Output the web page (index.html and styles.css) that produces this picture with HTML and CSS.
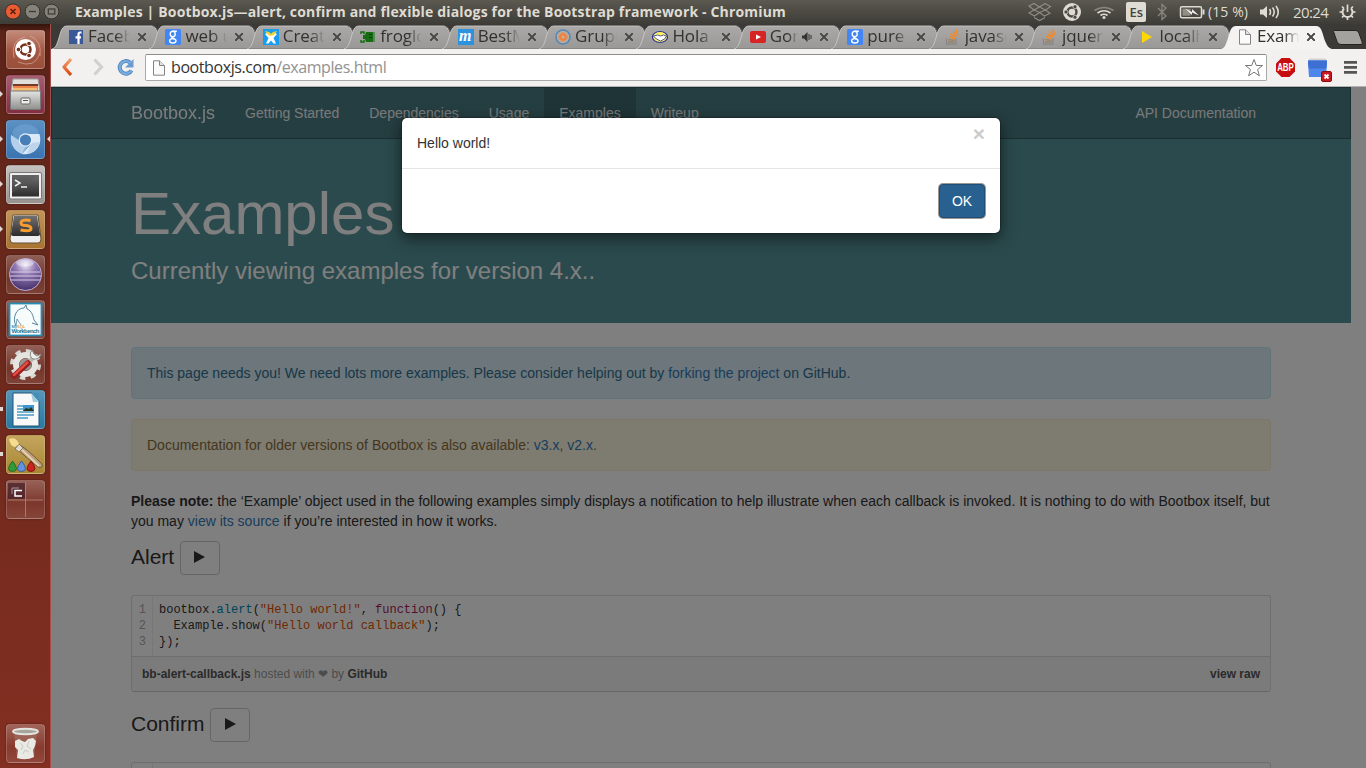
FILE: index.html
```html
<!DOCTYPE html>
<html lang="en">
<head>
<meta charset="utf-8">
<title>Examples | Bootbox.js</title>
<link rel="stylesheet" href="styles.css">
</head>
<body>
<svg class="defs" width="0" height="0">
  <defs>
    <linearGradient id="tabg" x1="0" y1="0" x2="0" y2="1"><stop offset="0" stop-color="#aaa9a7"/><stop offset="1" stop-color="#999896"/></linearGradient>
    <linearGradient id="shine" x1="0" y1="0" x2="0" y2="1"><stop offset="0" stop-color="#fff" stop-opacity=".25"/><stop offset=".5" stop-color="#fff" stop-opacity=".04"/><stop offset="1" stop-color="#fff" stop-opacity=".08"/></linearGradient>
    <linearGradient id="orange" x1="0" y1="0" x2="0" y2="1"><stop offset="0" stop-color="#f0a070"/><stop offset="1" stop-color="#e04410"/></linearGradient>
    <linearGradient id="silver" x1="0" y1="0" x2="0" y2="1"><stop offset="0" stop-color="#e4e4e2"/><stop offset="1" stop-color="#8f8f8d"/></linearGradient>
    <linearGradient id="dark" x1="0" y1="0" x2="0" y2="1"><stop offset="0" stop-color="#707070"/><stop offset="1" stop-color="#2c2c2c"/></linearGradient>
    <radialGradient id="purple" cx=".5" cy=".2" r=".8"><stop offset="0" stop-color="#f0e8f8"/><stop offset=".4" stop-color="#9078b0"/><stop offset="1" stop-color="#44306c"/></radialGradient>
    <symbol id="tab" viewBox="0 0 115 24"><path d="M0 24C4 23 5 19 7 13 9 6 10 1 15 1H99C104 1 105 6 107 13 109 19 111 23 115 24Z" fill="url(#tabg)"/><path d="M0 24C4 23 5 19 7 13 9 6 10 1 15 1H99C104 1 105 6 107 13 109 19 111 23 115 24" fill="none" stroke="#c9c8c5" stroke-width=".9"/><path d="M101 1C105 2 106 6 108 13 110 20 112 23 115 24" fill="none" stroke="#666562" stroke-width="1"/><path d="M2 23.600H113" stroke="#807f7c" stroke-width=".8"/></symbol>
    <symbol id="google" viewBox="0 0 16 16"><rect width="16" height="16" rx="1.5" fill="#4285f4"/><g fill="none" stroke="#fff" stroke-width="1.4"><ellipse cx="7.7" cy="5" rx="2.5" ry="2.7"/><ellipse cx="7.8" cy="11.8" rx="3.2" ry="2.2"/><path d="M7.8 2.2H11.8M8.2 7.5 7 8.8 9.5 10"/></g></symbol>
    <symbol id="so" viewBox="0 0 16 16"><path d="M1.500 9.5V15.200H11V9.500" fill="none" stroke="#868686" stroke-width="1.2"/><path d="M3 13H9.500M3.300 10.700 9.600 11.400" stroke="#9b8065" stroke-width="1.3"/><path d="M4 7.800 10 9.800M5.500 5 10.800 8.200M8 2.500 11.500 7M11 .6 12.700 6" stroke="#f08a2c" stroke-width="1.600"/></symbol>
    <symbol id="page" viewBox="0 0 16 16"><path d="M2.500 .8H8.500L13.500 5.500V15.200H2.500Z" fill="#fafafa" stroke="#848484"/><path d="M8.500 .8V5.500H13.500" fill="#e2e2e2" stroke="#848484"/></symbol>
  </defs>
</svg>
<header class="titlebar">
  <svg class="winbtns" width="63" height="24">
    <circle cx="13" cy="11.5" r="7.6" fill="#ec5b31" stroke="#38352e"/><path d="M10.5 9l5 5m0-5-5 5" stroke="#55200f" stroke-width="1.5"/>
    <circle cx="32.5" cy="11.5" r="7.4" fill="#85827a" stroke="#35332d"/><path d="M29 11.5h7" stroke="#3b3933" stroke-width="1.3"/>
    <circle cx="51.5" cy="11.5" r="7.4" fill="#85827a" stroke="#35332d"/><rect x="48.3" y="9" width="6.5" height="5" fill="none" stroke="#3b3933" stroke-width="1.2"/>
  </svg>
  <div class="wintitle">Examples | Bootbox.js—alert, confirm and flexible dialogs for the Bootstrap framework - Chromium</div>
  <div class="tray">
    <svg class="trayicons" width="186" height="24">
      <g fill="none" stroke="#8f8c84" stroke-width="1.1"><path d="M4 6l5-2.500L14.500 7 20 3.500 25.500 6.500 20.500 10 25 13.200 19.500 16 14.500 12.500 9.500 16 4 13 9 10ZM14.500 7 9 10 14.500 12.500 20.500 10ZM9 17.500l5.500 3L20 17.500"/></g>
      <circle cx="47" cy="12" r="9" fill="#dfdbd2"/><circle cx="47" cy="12" r="4.500" fill="none" stroke="#4b4943" stroke-width="2.400"/><g fill="#4b4943" stroke="#dfdbd2" stroke-width=".7"><circle cx="41" cy="12" r="2"/><circle cx="50" cy="6.800" r="2"/><circle cx="50" cy="17.200" r="2"/></g>
      <g fill="none" stroke="#dfdbd2" stroke-width="1.700"><path d="M69.500 10.500q9.500-6 19 0" stroke="#8b887f"/><path d="M72.500 13q6.500-4.500 13 0M75.500 15.500q3.500-2.500 7 0"/></g><circle cx="79" cy="17.500" r="1.500" fill="#dfdbd2"/>
      <rect x="101" y="2" width="20" height="20" rx="2" fill="#dfdbd2"/><text x="104.500" y="17" class="lang">Es</text>
      <path d="M133 8l8 8-4 3.500V4.500l4 3.500-8 8" fill="none" stroke="#89867e" stroke-width="1.300"/>
      <rect x="155.500" y="6.700" width="21" height="11" rx="1.500" fill="none" stroke="#dfdbd2" stroke-width="1.500"/><rect x="157.500" y="8.700" width="8" height="7" fill="#908d85"/><path d="M178.500 9.500v5" stroke="#dfdbd2" stroke-width="2"/><path d="M160 8.500l7 3.500V9l7 6.500-7-3V15z" fill="#eee"/>
    </svg>
    <span class="battery">(15 %)</span>
    <svg width="23" height="24"><path d="M1 9.500h3L8 6v12l-4-3.500H1z" fill="#dfdbd2"/><path d="M10.500 9q2 3 0 6M13.500 7.500q3.500 4.500 0 9M17 6q4.500 6 0 12" fill="none" stroke="#dfdbd2" stroke-width="1.600"/></svg>
    <span class="clock">20:24</span>
    <svg width="17" height="24"><g transform="translate(8.500 12)" fill="none" stroke="#dfdbd2"><path d="M-3.500-3.500A5 5 0 1 0 3.500-3.500" stroke-width="2"/><path d="M0-7.500V0M-8 0h3M5 0h3M0 5v3M-5.500-5.500l2 2M5.500-5.500l-2 2M-5.500 5.500l2-2M5.500 5.500l-2-2" stroke-width="1.700"/></g></svg>
  </div>
</header>
<div class="desktop">
  <aside class="launcher">
    <div class="tile ubuntu"><svg viewBox="0 0 39 39"><rect width="39" height="39" rx="3" fill="url(#shine)"/><g fill="none" stroke="#ddb09f" stroke-opacity=".65"><path d="M8 28Q4 10 19 7M12 32Q29 39 34 23M34 26Q36 10 24 6"/></g><circle cx="19.500" cy="19.500" r="10.500" fill="#fff"/><circle cx="19.500" cy="19.500" r="5" fill="none" stroke="#75301d" stroke-width="2.500"/><g fill="#75301d" stroke="#fff"><circle cx="12.500" cy="19.500" r="2.300"/><circle cx="23" cy="13.500" r="2.300"/><circle cx="23" cy="25.500" r="2.300"/></g></svg></div>
    <div class="tile files run"><svg viewBox="0 0 39 39"><path d="M7 4h25l2 13H5z" fill="#e0dfdc" stroke="#a2a09d"/><path d="M7 9h25v7H7z" fill="#713a2b"/><path d="M7 11h25v6H7z" fill="#ef854b"/><path d="M7 13h24v3H7z" fill="#f4bd76"/><rect x="4.500" y="16" width="30" height="18.500" rx="1" fill="url(#silver)" stroke="#777"/><rect x="15" y="23" width="9" height="6" rx="1" fill="#eee" stroke="#666"/><path d="M17 25.500h5" stroke="#555"/></svg></div>
    <div class="tile chromium run focus"><svg viewBox="0 0 39 39"><ellipse cx="19.500" cy="13" rx="13" ry="9" fill="#79aeda" opacity=".45"/><path d="M5 15Q3 28 16 34L24 24 13 20Z" fill="#8fbbe2"/><path d="M5 15L13.500 21Q14 26 19 27L16 34Q4 29 5 15" fill="#b4d0ec"/><path d="M19.500 14H33.500Q37 27 25 33 20 35 16 34L25 24Z" fill="#dce8f5"/><path d="M25 23L21 34Q31 33 34 22Z" fill="#bcd4ec"/><circle cx="19.500" cy="20" r="6.800" fill="#e6eff8"/><circle cx="19.500" cy="20" r="5.600" fill="#477db8"/></svg></div>
    <div class="tile terminal run"><svg viewBox="0 0 39 39"><rect x="3.500" y="7.500" width="32" height="26.500" rx="1.500" fill="#eee" stroke="#777"/><rect x="6" y="10" width="27" height="21.500" fill="url(#dark)"/><path d="M6 10h27L6 28z" fill="#555" opacity=".4"/><path d="M9 15l5 3-5 3M15 22h6" fill="none" stroke="#eee" stroke-width="1.500"/></svg></div>
    <div class="tile sublime run"><svg viewBox="0 0 39 39"><path d="M7 5h25l3 24q0 4-3 4H7q-3 0-3-4z" fill="#eee" stroke="#624f34"/><path d="M8 6h23l3 18q0 2-2 2H7q-2 0-2-2z" fill="url(#dark)"/><path d="M24.500 10.500Q15 9 15 13q0 2.500 5 2.500 5 .5 5 3 0 3.500-10.500 1.500" fill="none" stroke="#f79c2f" stroke-width="3"/></svg></div>
    <div class="tile"><svg viewBox="0 0 39 39"><circle cx="19.500" cy="19.500" r="16" fill="url(#purple)" stroke="#c0b0d6"/><path d="M5 17h29M4 21h31M5 25h29" stroke="#d5c9e6" stroke-width="1.200"/><ellipse cx="19" cy="8" rx="9" ry="3.500" fill="#fff" opacity=".4"/></svg></div>
    <div class="tile"><svg viewBox="0 0 39 39"><rect x="3.500" y="3.500" width="32" height="32" fill="#f7fbfc" stroke="#238db4" stroke-width="1.800"/><path d="M10 26C6 18 10 8 18 8l2-3 1 4c5 2 6 7 7 11l4 5-6-2" fill="none" stroke="#57889f"/><path d="M10 26l1-7 4 6" fill="none" stroke="#57889f" stroke-width=".8"/><text x="5.500" y="28" class="wb sm" fill="#4e8db1">My<tspan fill="#eb9d32">SQL</tspan></text><text x="5.500" y="33" class="wb" fill="#187c9b" textLength="28">Workbench</text></svg></div>
    <div class="tile"><svg viewBox="0 0 39 39"><circle cx="19.500" cy="19.500" r="13.500" fill="none" stroke="#d7d7d3" stroke-width="4" stroke-dasharray="5.300 5.300"/><circle cx="19.500" cy="19.500" r="9.500" fill="none" stroke="#e5e4e1" stroke-width="6"/><circle cx="19.500" cy="19.500" r="6" fill="#96938f"/><path d="M20 20L30 10" stroke="#b8b6b3" stroke-width="4.500"/><path d="M26 5q-4 6 1 9 6 1 8-5l-4 2-3-2z" fill="#eeeeeb" stroke="#888"/><path d="M8 31L22 18" stroke="#941d1d" stroke-width="5.500" stroke-linecap="round"/><path d="M8 30L21.500 17.500" stroke="#e34b43" stroke-width="2.500" stroke-linecap="round"/></svg></div>
    <div class="tile writer run box"><svg viewBox="0 0 39 39"><path d="M7 3h19l7 8v25H7z" fill="#f9f9f9" stroke="#1c577a"/><path d="M25 3h8v9z" fill="#438fb7"/><path d="M25 3l8 9h-6z" fill="#a3cadd"/><path d="M11 16h6M11 19h6M11 22h17M11 25h17M11 28h11" stroke="#4b9cc6" stroke-width="1.600"/><rect x="17" y="15" width="11" height="6" fill="#3c96d0"/><path d="M17 21l3-3 3 1 2-2 3 4z" fill="#24351f"/></svg></div>
    <div class="tile paint run box"><svg viewBox="0 0 39 39"><path d="M13 10Q18 11 36 29q1 5-4 3Q21 23 11 14z" fill="#bca080" stroke="#735b3c"/><path d="M13 12l20 19" stroke="#e6d1ae" stroke-width="1.800"/><path d="M9 14l4-5 4 4-4 4z" fill="#dedad1" stroke="#867755"/><path d="M3 4q7-3 10 5l-4 3Q4 11 3 4" fill="#f5dc91"/><g stroke-width=".8"><path d="M6.500 26q8 10 0 10.500-8-.5 0-10.500" fill="#329b37" stroke="#17621d"/><path d="M15.500 26q8 10 0 10.500-8-.5 0-10.500" fill="#6094df" stroke="#284e98"/><path d="M25 26q8 10 0 10.500-8-.5 0-10.500" fill="#c82421" stroke="#7a0808"/></g></svg></div>
    <div class="tile"><svg viewBox="0 0 39 39"><path d="M2 3h17v16H2z" fill="#3c1925" opacity=".65"/><path d="M19.500 2v35M2 20h35" stroke="#b7857b" stroke-width=".8"/><path d="M6 14V8h7" fill="none" stroke="#aa9398"/><path d="M16 10.500H9V16h7" fill="none" stroke="#fff" stroke-width="1.500"/></svg></div>
    <div class="tile trash"><svg viewBox="0 0 39 39"><path d="M8 9h23l-3 24q-8 4-17 0z" fill="#a4776c" opacity=".5"/><path d="M9 17l4-2 3 2 3 1 3-3 5-1 3 3-1 5-2 4 1 7q-8 4-17 1l1-8-3-3z" fill="#eaeae5"/><path d="M14 19l3 3-2 4M23 17l-2 5 4 3M17 30l2-4 4 2" fill="none" stroke="#c9c9c3"/><ellipse cx="19.500" cy="7.500" rx="12.500" ry="2.700" fill="#a7a39d" stroke="#e3e3df" stroke-width="2"/></svg></div>
  </aside>
  <section class="browser">
    <nav class="tabs">
      <div class="tab"><svg class="shape"><use href="#tab"/></svg><svg class="fav" viewBox="0 0 16 16"><rect x="1" y="1" width="14" height="14" fill="#3b5998"/><path d="M13.500 3.500h-1.300q-1.700 0-1.700 2V15M7.500 8.300h5.500" fill="none" stroke="#fff" stroke-width="2.200"/></svg><span>Faceb</span><i></i></div>
      <div class="tab"><svg class="shape"><use href="#tab"/></svg><svg class="fav"><use href="#google"/></svg><span>web u</span><i></i></div>
      <div class="tab"><svg class="shape"><use href="#tab"/></svg><svg class="fav" viewBox="0 0 16 16"><rect width="16" height="16" fill="#179cf0"/><path d="M3 14.500L5.500 9 2 5l3-1.500L8 6l3-2.500L14 5l-3.500 4L13 14.500h-2.500L8 11.500l-2.500 3z" fill="#fff"/><path d="M2 2l4 1 2 2 2-2 4-1-3 4-3 1-3-1z" fill="#f5d42c"/></svg><span>Creat</span><i></i></div>
      <div class="tab"><svg class="shape"><use href="#tab"/></svg><svg class="fav" viewBox="0 0 16 16"><path d="M6 3h7v10H6l-1-3H3V6h2z" fill="#176d13"/><path d="M1 5V3h3v2M1 11v2h3v-2" fill="none" stroke="#176d13" stroke-width="1.500"/><path d="M14 3v10" stroke="#176d13"/><path d="M9 5.500h3M9 8.500h3" stroke="#0a3e09"/></svg><span>froglo</span><i></i></div>
      <div class="tab"><svg class="shape"><use href="#tab"/></svg><svg class="fav" viewBox="0 0 16 16"><rect width="16" height="16" fill="#2c94df"/><text x="1" y="12" class="mfav">m</text></svg><span>BestM</span><i></i></div>
      <div class="tab"><svg class="shape"><use href="#tab"/></svg><svg class="fav" viewBox="0 0 16 16"><circle cx="8" cy="8" r="7" fill="#b7aca0" stroke="#5289ba" stroke-width="1.600"/><path d="M8 3.500v9M3.500 8h9M5 5l6 6M11 5l-6 6" stroke="#ef8442" stroke-width="2.400"/><circle cx="8" cy="8" r="1.300" fill="#c7b9a6"/></svg><span>Grupo</span><i></i></div>
      <div class="tab"><svg class="shape"><use href="#tab"/></svg><svg class="fav" viewBox="0 0 16 16"><ellipse cx="8" cy="8" rx="7.500" ry="5.500" fill="#fff06a" stroke="#28348c" stroke-width="1.200"/><path d="M1.500 7l4-1 3 1 3-1 3 1-2 3-4 2-4-2z" fill="#fff" stroke="#28348c" stroke-width=".8"/></svg><span>Hola -</span><i></i></div>
      <div class="tab sound"><svg class="shape"><use href="#tab"/></svg><svg class="fav" viewBox="0 0 16 16"><rect y="2" width="16" height="12" rx="2" fill="#d62424"/><path d="M6 5.500v5l5-2.500z" fill="#fff"/></svg><span>Gor</span><svg class="spk" width="11" height="12"><path d="M0 4.500h2L5.500 1v10L2 7.500H0z" fill="#333"/><path d="M7 3v6M9 4v4" stroke="#333"/></svg><i></i></div>
      <div class="tab"><svg class="shape"><use href="#tab"/></svg><svg class="fav"><use href="#google"/></svg><span>pure</span><i></i></div>
      <div class="tab"><svg class="shape"><use href="#tab"/></svg><svg class="fav"><use href="#so"/></svg><span>javasc</span><i></i></div>
      <div class="tab"><svg class="shape"><use href="#tab"/></svg><svg class="fav"><use href="#so"/></svg><span>jquer</span><i></i></div>
      <div class="tab"><svg class="shape"><use href="#tab"/></svg><svg class="fav" viewBox="0 0 16 16"><path d="M3 2v12L13 8z" fill="#ffd800"/></svg><span>localh</span><i></i></div>
      <div class="tab active"><svg class="shape" viewBox="0 0 115 24"><path d="M0 24C4 23 5 19 7 13 9 6 10 1 15 1H95C100 1 101 6 103 13 105 19 107 23 111 24Z" fill="#f4f3f1"/></svg><svg class="fav"><use href="#page"/></svg><span>Exam</span><i></i></div>
      <svg class="newtab" width="34" height="24"><path d="M3 5.500h22q2 0 3 3l3 8q1 3-1 3H10q-3 0-4-3L3 8q-1-2 0-2.500z" fill="#a3a29f" stroke="#252420"/></svg>
    </nav>
    <div class="toolbar">
      <svg width="94" height="37"><path d="M20 10l-7 8 7 8" fill="none" stroke="url(#orange)" stroke-width="3.200" stroke-linejoin="round"/><path d="M43.500 10.500l7 7.500-7 7.500" fill="none" stroke="#d2d0ce" stroke-width="3.200"/><path d="M79 13.500a6.300 6.300 0 1 0 1.500 8" fill="none" stroke="#4b83bd" stroke-width="4"/><path d="M79 13.500a6.300 6.300 0 1 0 1.500 8" fill="none" stroke="#79aadd" stroke-width="2.400"/><path d="M82.500 10v8.500H74z" fill="#689cd2"/></svg>
      <div class="omnibox"><svg class="pageicon" width="16" height="16"><use href="#page"/></svg><div class="url">bootboxjs.com<span>/examples.html</span></div><svg class="star" width="20" height="20"><path d="M10 1.500l2.300 6h6.200l-4.900 4 1.800 6.300L10 14.200l-5.400 3.600 1.800-6.300-4.900-4h6.200z" fill="#fff" stroke="#777"/></svg></div>
      <svg width="99" height="37"><path d="M14.500 9h8l5.500 5.500v8L22.500 28h-8L9 22.500v-8z" fill="#c70d10"/><text x="10.200" y="22" class="abp" textLength="16.600" lengthAdjust="spacingAndGlyphs">ABP</text><path d="M42 9.500h17v3H42z" fill="#d2d2d2"/><path d="M41 11.500h19v3l-1 13.500H42l-1-13.500z" fill="#4f86ec"/><path d="M41 11.500h19v3l-1 5H42l-1-5z" fill="#3d70d2"/><rect x="54.500" y="22.500" width="10" height="10" rx="1.500" fill="#c71820" stroke="#8c0e13"/><path d="M57.500 25.500l4 4m0-4-4 4" stroke="#fff" stroke-width="1.800"/><path d="M77 13.300h13M77 18.300h13M77 23.300h13" stroke="#555" stroke-width="2.800"/></svg>
    </div>
    <main class="viewport">
      <div class="site">
        <div class="navbar"><div class="container navrow"><span class="brand">Bootbox.js</span><span class="link">Getting Started</span><span class="link">Dependencies</span><span class="link">Usage</span><span class="link current">Examples</span><span class="link">Writeup</span><span class="link api">API Documentation</span></div></div>
        <div class="jumbo"><div class="container"><h1>Examples</h1><p>Currently viewing examples for version 4.x..</p></div></div>
        <div class="container content">
          <div class="alert info">This page needs you! We need lots more examples. Please consider helping out by <a>forking the project</a> on GitHub.</div>
          <div class="alert warning">Documentation for older versions of Bootbox is also available: <a>v3.x</a>, <a>v2.x</a>.</div>
          <p class="note"><b>Please note:</b> the ‘Example’ object used in the following examples simply displays a notification to help illustrate when each callback is invoked. It is nothing to do with Bootbox itself, but<br>you may <a>view its source</a> if you’re interested in how it works.</p>
          <div class="heading"><h2>Alert</h2><button><svg width="11" height="12"><path d="M0 0v12l11-6z" fill="#333"/></svg></button></div>
          <div class="gist">
            <div class="code"><pre class="lines">1
2
3</pre><pre>bootbox.<em class="fn">alert</em>(<em class="str">"Hello world!"</em>, <em class="kw">function</em>() {
  Example.show(<em class="str">"Hello world callback"</em>);
});</pre></div>
            <div class="meta"><span><b>bb-alert-callback.js</b> hosted with ❤ by <b>GitHub</b></span><b>view raw</b></div>
          </div>
          <div class="heading"><h2>Confirm</h2><button><svg width="11" height="12"><path d="M0 0v12l11-6z" fill="#333"/></svg></button></div>
          <div class="gist"><div class="code"><pre class="lines"></pre></div></div>
        </div>
      </div>
      <div class="backdrop"></div>
      <div class="modal"><div class="mbody"><span>Hello world!</span><span class="close">×</span></div><div class="mfoot"><button class="ok">OK</button></div></div>
    </main>
  </section>
</div>
</body>
</html>
```

FILE: styles.css
```css
* { box-sizing: border-box; }
body { margin: 0; width: 1366px; height: 768px; overflow: hidden; display: flex; flex-direction: column; font: 14px/20px "Liberation Sans", Arial, sans-serif; color: #333; background: #3c3b37; }
svg { display: block; flex: none; }
.defs { position: absolute; }
h1, h2, p, pre { margin: 0; font-weight: normal; }
button { font: inherit; }

.titlebar { height: 24px; flex: none; display: flex; align-items: center; background: linear-gradient(#5b5950, #3d3c37); color: #dfdbd2; font-family: "Open Sans", "Noto Sans", sans-serif; white-space: nowrap; }
.wintitle { margin-left: 12px; width: 720px; font-size: 14px; font-weight: 700; letter-spacing: .16px; line-height: 24px; }
.tray { margin-left: auto; display: flex; align-items: center; width: 341px; font-size: 15px; }
.trayicons { margin-right: -4px; }
.battery { width: 52px; font-size: 14px; letter-spacing: .1px; padding-left: 1px; }
.clock { margin: 0 10px 0 11px; width: 36px; font-size: 15px; letter-spacing: -.6px; line-height: 24px; }
.lang { font: 600 13px "Open Sans", sans-serif; fill: #45433e; }

.desktop { flex: 1; min-height: 0; display: flex; }
.launcher { width: 51px; flex: none; padding: 6px 0 5px 6px; display: flex; flex-direction: column; gap: 6px; background: linear-gradient(#32130d, #5d2419 8px, #6b281c 40%, #832f21); border-right: 1px solid #a84c49; }
.tile { width: 39px; height: 39px; flex: none; position: relative; border: 1px solid rgba(255,255,255,.18); border-radius: 4px; background: linear-gradient(rgba(255,255,255,.26), rgba(255,255,255,.06) 60%, rgba(255,255,255,.12)); box-shadow: 0 0 2px rgba(0,0,0,.45); }
.tile svg { width: 39px; height: 39px; margin: -1px; }
.ubuntu { background: linear-gradient(#b06650, #91402a); }
.files { background: linear-gradient(#a45e70, #842d40); }
.chromium { background: linear-gradient(#5b90c2, #3b74b1); }
.terminal { background: linear-gradient(#c5c1bf, #999390); }
.sublime { background: linear-gradient(#c29458, #a97431); }
.writer { background: linear-gradient(#5795b9, #2b789f); }
.paint { background: linear-gradient(#c3a55d, #a98632); }
.trash { margin-top: auto; }
.run::before { content: ""; position: absolute; left: -7px; top: 15px; border: 3px solid transparent; border-left-color: #e0d7d4; border-right: 0; }
.run.box::before { width: 3px; height: 4px; top: 16px; border: 0; background: #e0d7d4; }
.focus::after { content: ""; position: absolute; right: -6px; top: 15px; border: 3px solid transparent; border-right-color: #e0d7d4; border-left: 0; }
.wb { font: 700 6px "Liberation Sans", sans-serif; }
.wb.sm { font-size: 4px; }

.browser { flex: 1; min-width: 0; display: flex; flex-direction: column; }
.tabs { height: 25px; flex: none; display: flex; align-items: flex-end; padding-left: 1px; background: #3b3a36; font: 17px/22px "Open Sans", "Noto Sans", sans-serif; }
.tab { width: 115px; height: 24px; flex: none; margin-right: -17.6px; padding: 0 0 0 16px; display: flex; align-items: center; position: relative; color: #33312d; }
.tab .shape { position: absolute; left: 0; top: 0; width: 115px; height: 24px; }
.tab .fav { width: 16px; height: 16px; position: relative; }
.tab span { position: relative; width: 42px; height: 24px; margin-left: 4px; margin-right: 8px; overflow: hidden; white-space: nowrap; letter-spacing: -.1px; -webkit-mask-image: linear-gradient(90deg, #000 65%, transparent); mask-image: linear-gradient(90deg, #000 65%, transparent); }
.tab i { width: 8px; height: 8px; position: relative; background: linear-gradient(45deg, transparent 42%, #4c4a47 44%, #4c4a47 56%, transparent 58%), linear-gradient(-45deg, transparent 42%, #4c4a47 44%, #4c4a47 56%, transparent 58%); }
.sound span { width: 28px; margin-right: 4px; }
.sound .spk { position: relative; margin-right: 7px; }
.newtab { margin-left: 13px; }
.mfav { font: italic 700 16px "Liberation Serif", serif; fill: #fff; }
.toolbar { height: 38px; flex: none; display: flex; background: #f2f1f0; border-bottom: 1px solid #b4b3b1; }
.omnibox { flex: 1; height: 27px; margin-top: 5px; padding: 0 2px 0 5px; display: flex; align-items: center; background: #fff; border: 1px solid #aaa8a6; border-top-color: #8d8b89; border-radius: 2px; }
.url { flex: 1; margin-left: 4px; padding-bottom: 1px; font: 16px/23px "Open Sans", "Noto Sans", sans-serif; letter-spacing: -.41px; color: #333; white-space: nowrap; }
.url span { color: #929292; }
.abp { font: 700 10.500px "Liberation Sans", sans-serif; fill: #fff; }

.viewport { flex: 1; min-height: 0; position: relative; overflow: hidden; background: #fff; }
.site { width: 1300px; }
.container { width: 1140px; margin: 0 auto; }
.navbar { height: 52px; border: 1px solid #355d62; background: #4b7c83; }
.navrow { display: flex; color: #fff; }
.brand { font-size: 18px; line-height: 50px; margin-right: 15px; opacity: .96; }
.link { padding: 15px; line-height: 20px; color: #f2f2f2; }
.link.current { background: #3c686d; }
.api { margin-left: auto; }
.jumbo { height: 184px; padding-top: 42px; background: #57949a; color: #fff; }
.jumbo h1 { font-size: 60px; line-height: 66px; }
.jumbo p { font-size: 24px; line-height: 34px; margin-top: 7px; }
.content { padding-top: 24px; }
.alert { height: 52px; margin-bottom: 20px; padding: 15px; border: 1px solid; border-radius: 4px; }
.info { background: #d9edf7; border-color: #bce8f1; color: #31708f; }
.warning { background: #fcf8e3; border-color: #faebcc; color: #8a6d3b; }
a { color: #337ab7; }
.note { margin-bottom: 10px; white-space: nowrap; }
.heading { display: flex; align-items: center; gap: 5.6px; height: 34px; }
.heading h2 { font-size: 21px; line-height: 32px; padding-bottom: 2px; }
.heading button { width: 40px; height: 34px; padding: 0 0 2px; display: flex; align-items: center; justify-content: center; background: #fff; border: 1px solid #ccc; border-radius: 4px; }
.gist { height: 97px; margin: 20px 0 16px; border: 1px solid #ddd; border-bottom-color: #ccc; border-radius: 3px; font-size: 12px; }
.code { height: 61px; display: flex; border-bottom: 1px solid #ddd; }
.code pre { padding: 6px 0 0 6px; font: 12px/16px "Liberation Mono", monospace; }
.code .lines { width: 21px; padding: 6px 6px 0 0; text-align: right; color: #aaa; border-right: 1px solid #eee; }
em { font-style: normal; }
.fn { color: #0086b3; }
.str { color: #df5000; }
.kw { color: #a71d5d; }
.meta { height: 34px; padding: 0 10px; display: flex; justify-content: space-between; align-items: center; background: #f7f7f7; color: #999; }
.meta b { color: #555; }
.backdrop { position: absolute; inset: 0; background: rgba(0,0,0,.5); }
.modal { position: absolute; left: 350px; top: 30px; width: 600px; height: 117px; border: 1px solid rgba(0,0,0,.2); border-radius: 6px; background: #fff; background-clip: padding-box; box-shadow: 0 5px 15px rgba(0,0,0,.5); }
.mbody { height: 51px; padding: 15px; display: flex; justify-content: space-between; border-bottom: 1px solid #e5e5e5; }
.close { font-size: 21px; font-weight: 700; line-height: 21px; margin-top: -10px; color: #ccc; }
.mfoot { padding: 15px; display: flex; justify-content: flex-end; }
.ok { width: 46px; height: 34px; padding: 0; border: 1px solid #204d74; border-radius: 4px; background: #286090; color: #fff; box-shadow: 0 0 0 1px #9b9792; }
```
